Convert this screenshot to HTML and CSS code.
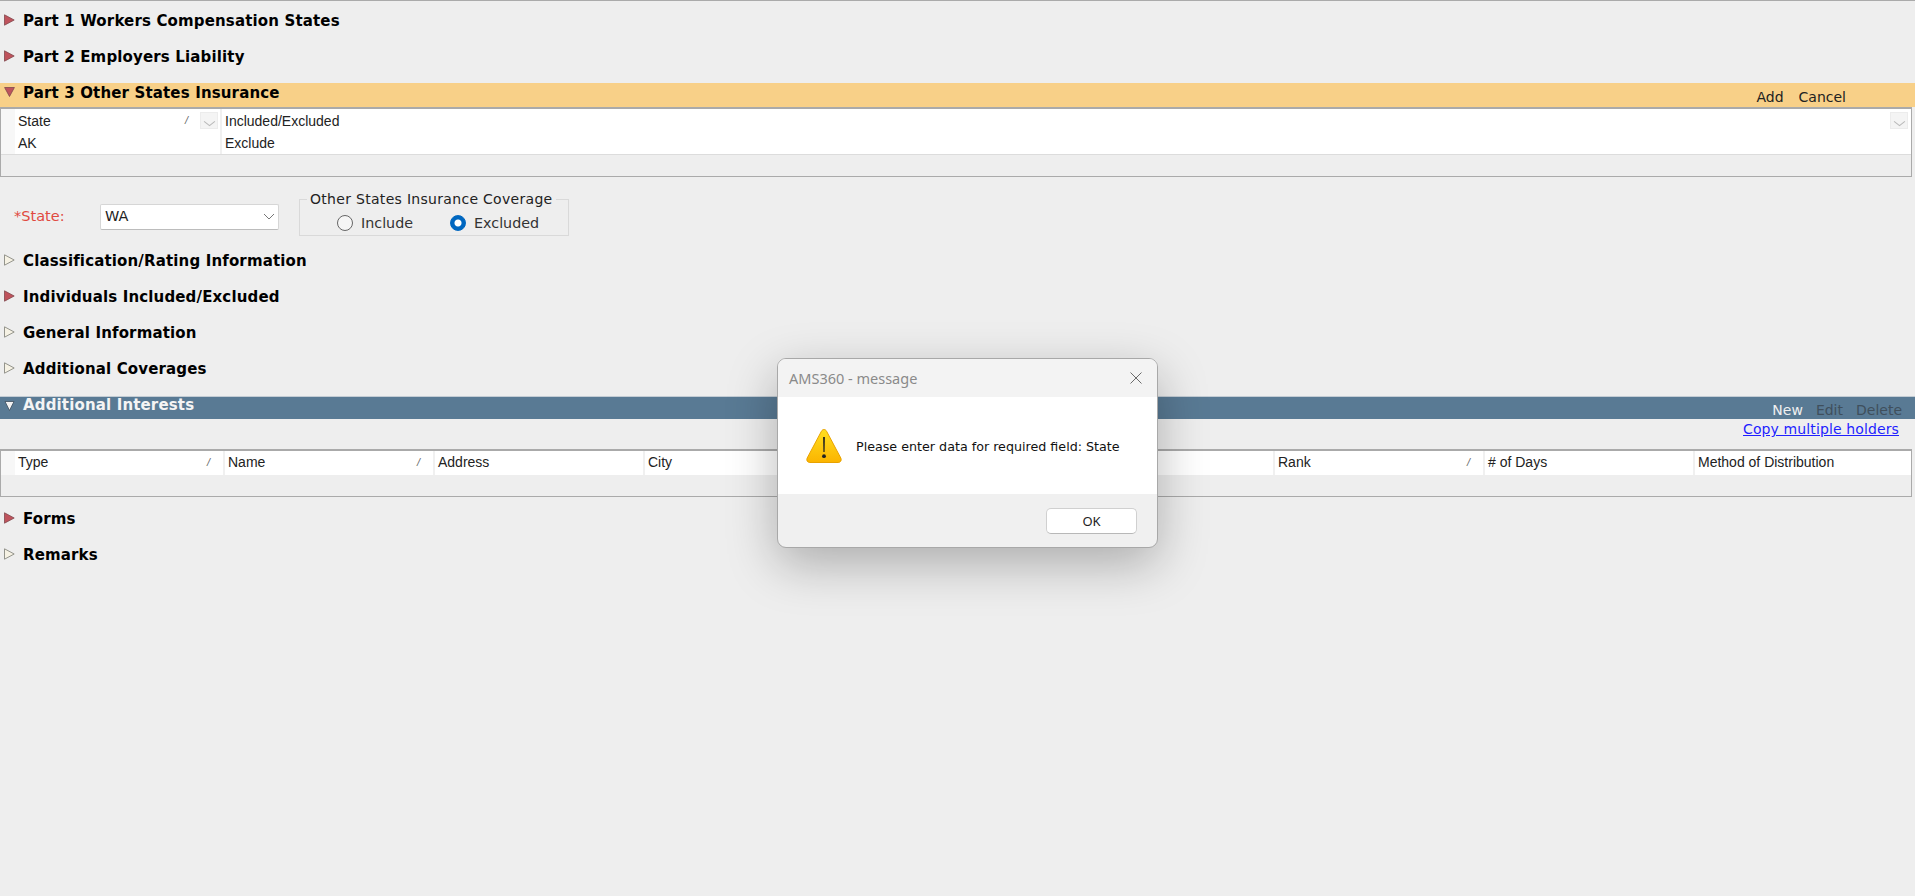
FILE: index.html
```html
<!DOCTYPE html>
<html lang="en">
<head>
  <meta charset="UTF-8">
  <title>AMS360</title>
  <link rel="stylesheet" href="styles.css">
</head>
<body>
  <div class="page">
    <div class="sec">
      <svg class="tri" viewBox="0 0 11 12"><path class="tri-red" d="M.5 .8L10.2 6L.5 11.2Z"/></svg>
      <span class="sec-title">Part 1 Workers Compensation States</span>
    </div>
    <div class="sec">
      <svg class="tri" viewBox="0 0 11 12"><path class="tri-red" d="M.5 .8L10.2 6L.5 11.2Z"/></svg>
      <span class="sec-title">Part 2 Employers Liability</span>
    </div>

    <!-- Part 3 abierto -->
    <div class="bar bar-yellow">
      <svg class="tri-down" viewBox="0 0 11 10"><path class="tri-red" d="M.6 .5H10.4L5.5 9.5Z"/></svg>
      <span class="sec-title">Part 3 Other States Insurance</span>
      <div class="bar-actions">
        <span>Add</span>
        <span>Cancel</span>
      </div>
    </div>
    <div class="panel panel-states">
      <div class="grid-rows">
        <div class="row row-head cols-states">
          <div class="cell">State<i class="sort">/</i><span class="drop"><svg viewBox="0 0 12 8"><path d="M1 2L6 6L11 2" fill="none" stroke="#b9b9b9"/></svg></span></div>
          <div class="cell">Included/Excluded<span class="drop drop-end"><svg viewBox="0 0 12 8"><path d="M1 2L6 6L11 2" fill="none" stroke="#b9b9b9"/></svg></span></div>
        </div>
        <div class="row cols-states">
          <div class="cell">AK</div>
          <div class="cell">Exclude</div>
        </div>
      </div>
    </div>

    <div class="state-form">
      <label class="state-label" for="state">*State:</label>
      <div class="select-wrap">
        <select id="state" class="state-select">
          <option>WA</option>
        </select>
        <svg class="chevron" viewBox="0 0 12 8"><path d="M1 1L6 6L11 1" fill="none" stroke="#777" stroke-width="1"/></svg>
      </div>
      <fieldset class="coverage">
        <legend>Other States Insurance Coverage</legend>
        <label class="radio radio-include"><input type="radio" name="cov"> Include</label>
        <label class="radio"><input type="radio" name="cov" checked> Excluded</label>
      </fieldset>
    </div>

    <div class="sec">
      <svg class="tri" viewBox="0 0 11 12"><path class="tri-empty" d="M.5 .8L10.2 6L.5 11.2Z"/></svg>
      <span class="sec-title">Classification/Rating Information</span>
    </div>
    <div class="sec">
      <svg class="tri" viewBox="0 0 11 12"><path class="tri-red" d="M.5 .8L10.2 6L.5 11.2Z"/></svg>
      <span class="sec-title">Individuals Included/Excluded</span>
    </div>
    <div class="sec">
      <svg class="tri" viewBox="0 0 11 12"><path class="tri-empty" d="M.5 .8L10.2 6L.5 11.2Z"/></svg>
      <span class="sec-title">General Information</span>
    </div>
    <div class="sec">
      <svg class="tri" viewBox="0 0 11 12"><path class="tri-empty" d="M.5 .8L10.2 6L.5 11.2Z"/></svg>
      <span class="sec-title">Additional Coverages</span>
    </div>

    <!-- Additional Interests abierto -->
    <div class="bar bar-blue">
      <svg class="tri-down" viewBox="0 0 11 10"><path class="tri-white" d="M1 .5H10L5.5 9.5Z"/></svg>
      <span class="sec-title">Additional Interests</span>
      <div class="bar-actions">
        <span class="act-on">New</span>
        <span class="act-off">Edit</span>
        <span class="act-off">Delete</span>
      </div>
    </div>
    <div class="link-row"><a href="#" class="copy-link">Copy multiple holders</a></div>
    <div class="panel panel-interests">
      <div class="grid-rows">
        <div class="row row-head cols-interests">
          <div class="cell">Type<i class="sort sort-end">/</i></div>
          <div class="cell">Name<i class="sort sort-end">/</i></div>
          <div class="cell">Address</div>
          <div class="cell">City</div>
          <div class="cell"></div>
          <div class="cell"></div>
          <div class="cell">Rank<i class="sort sort-end">/</i></div>
          <div class="cell"># of Days</div>
          <div class="cell">Method of Distribution</div>
        </div>
      </div>
    </div>

    <div class="sec sec-forms">
      <svg class="tri" viewBox="0 0 11 12"><path class="tri-red" d="M.5 .8L10.2 6L.5 11.2Z"/></svg>
      <span class="sec-title">Forms</span>
    </div>
    <div class="sec">
      <svg class="tri" viewBox="0 0 11 12"><path class="tri-empty" d="M.5 .8L10.2 6L.5 11.2Z"/></svg>
      <span class="sec-title">Remarks</span>
    </div>
  </div>

  <!-- Mensaje -->
  <div class="dialog">
    <div class="dialog-title">
      <span>AMS360 - message</span>
      <svg class="dialog-close" viewBox="0 0 12 12"><path d="M.5 .5L11.5 11.5M11.5 .5L.5 11.5" stroke="#6a6a6a" fill="none"/></svg>
    </div>
    <div class="dialog-body">
      <svg class="warn" viewBox="0 0 36 36">
        <defs>
          <linearGradient id="warnFill" x1="0" y1="0" x2="0" y2="1">
            <stop offset="0" stop-color="#ffdf20"/>
            <stop offset="1" stop-color="#fbb400"/>
          </linearGradient>
        </defs>
        <path d="M18 1.5C16.8 1.5 16 2.2 15.4 3.3L1.2 30C.1 32.2 1.4 34.5 3.8 34.5H32.2C34.6 34.5 35.9 32.2 34.8 30L20.6 3.3C20 2.2 19.2 1.5 18 1.5Z" fill="url(#warnFill)" stroke="#e8a200"/>
        <path d="M17.1 9H18.9L18.6 24H17.4Z" fill="#222"/>
        <circle cx="18" cy="28.2" r="1.9" fill="#222"/>
      </svg>
      <span class="dialog-msg">Please enter data for required field: State</span>
    </div>
    <div class="dialog-foot">
      <button class="dialog-ok">OK</button>
    </div>
  </div>
</body>
</html>
```

FILE: styles.css
```css
body {
  margin: 0;
  background-color: #eeeeee;
  font-family: "DejaVu Sans", sans-serif;
  color: #000;
  overflow: hidden;
}

.page {
  border-top: 1px solid #aaa;
  padding-top: 1px;
  height: 894px;
}

/* Encabezados de seccion */
.sec {
  display: flex;
  align-items: center;
  height: 36px;
}

.sec-forms {
  margin-top: 3px;
}

.tri {
  width: 11px;
  height: 12px;
  margin-left: 4px;
  flex: none;
}

.tri-red {
  fill: #bf535c;
  stroke: #80484d;
  stroke-width: 0.8;
}

.tri-empty {
  fill: #f6f2e4;
  stroke: #94948c;
  stroke-width: 1;
}

.tri-white {
  fill: #f2f2f2;
  stroke: #3d4f5e;
  stroke-width: 0.8;
}

.sec-title {
  margin-left: 8px;
  font-size: 15px;
  font-weight: bold;
  line-height: 18px;
  letter-spacing: 0.15px;
  color: #000;
}

.sec .sec-title {
  padding-top: 2px;
}

.bar {
  display: flex;
  position: relative;
  align-items: flex-start;
}

.bar .sec-title {
  margin-left: 8px;
}

.tri-down {
  width: 11px;
  height: 10px;
  margin: 4px 0 0 4px;
  flex: none;
}

.bar-yellow {
  margin-top: 9px;
  height: 24px;
  background-color: #f8d088;
  padding-top: 0;
}

.bar-yellow .sec-title {
  padding-top: 1px;
}

.bar-blue {
  margin-top: 10px;
  height: 23px;
  background-color: #597a94;
  border-top: 1px solid #c3ccd4;
  box-sizing: border-box;
}

.bar-blue .sec-title {
  color: #f4f4f4;
  line-height: 16px;
}

.bar-blue .tri-down {
  margin-top: 4px;
}

.bar-actions {
  margin-left: auto;
  display: flex;
  font-size: 14px;
  line-height: 16px;
  margin-top: 5px;
}

.bar-yellow .bar-actions {
  gap: 15px;
  margin-right: 69px;
  margin-top: 6px;
  color: #222;
}

.bar-blue .bar-actions {
  gap: 13px;
  margin-right: 13px;
  margin-top: 5px;
}

.act-on {
  color: #f0f0f0;
}

.act-off {
  color: #3f4f5c;
}

/* Grillas */
.panel {
  width: 1912px;
  box-sizing: border-box;
  border: 1px solid #aaa;
  border-top-width: 2px;
  border-left-width: 1px;
}

.panel-states {
  height: 70px;
}

.panel-interests {
  height: 48px;
}

.grid-rows {
  font-family: "Liberation Sans", Arial, sans-serif;
  font-size: 14px;
  color: #222;
  background-color: #fff;
  background-image: linear-gradient(#f7f7f7, #f7f7f7);
  background-size: 14px 100%;
  background-repeat: no-repeat;
}

.panel-states .grid-rows {
  border-bottom: 1px solid #dcdcdc;
  padding-left: 14px;
}

.panel-states .row-head .cell {
  padding-top: 4px;
}

.panel-interests .grid-rows {
  padding-left: 14px;
}

.row {
  display: grid;
  height: 22px;
}

.row-head {
  height: 23px;
}

.panel-interests .row-head {
  height: 24px;
}

.cols-states {
  grid-template-columns: 207px 1fr;
}

.cols-interests {
  grid-template-columns: repeat(8, 210px) 1fr;
}

.cell {
  position: relative;
  padding: 3px 0 0 3px;
  line-height: 17px;
  border-right: 2px solid #f0f0f0;
  white-space: nowrap;
}

.cell:last-child {
  border-right: none;
}

.sort {
  position: absolute;
  right: 32px;
  top: 3px;
  font-size: 11px;
  color: #666;
}

.sort-end {
  right: 13px;
}

.drop {
  position: absolute;
  right: 2px;
  top: 3px;
  width: 18px;
  height: 17px;
  box-sizing: border-box;
  background-color: #f4f4f4;
  border: 1px solid #ececec;
}

.drop svg {
  display: block;
  width: 13px;
  height: 9px;
  margin: 6px 0 0 2px;
}

.drop-end {
  right: 3px;
}

/* Formulario de estado */
.state-form {
  display: flex;
  align-items: flex-start;
  margin: 22px 0 6px;
  height: 37px;
}

.state-label {
  margin: 8px 0 0 14px;
  width: 86px;
  font-size: 14.5px;
  line-height: 18px;
  color: #e0493f;
}

.select-wrap {
  position: relative;
  margin-top: 5px;
}

.state-select {
  display: block;
  appearance: none;
  width: 179px;
  height: 26px;
  padding: 0 0 2px 4px;
  border: 1px solid #d6d6d6;
  border-bottom-color: #bcbcbc;
  border-radius: 2px;
  background-color: #fff;
  font-family: "DejaVu Sans", sans-serif;
  font-size: 14.5px;
  color: #222;
}

.chevron {
  position: absolute;
  right: 4px;
  top: 9px;
  width: 12px;
  height: 8px;
}

.coverage {
  display: flex;
  margin: -7px 0 0 20px;
  padding: 0;
  width: 270px;
  height: 44px;
  box-sizing: border-box;
  border: 1px solid #d9d9d9;
  font-size: 14.3px;
  color: #333;
}

.coverage legend {
  margin-left: 7px;
  padding: 0 3px;
  font-size: 14px;
  line-height: 15px;
  letter-spacing: 0.3px;
  white-space: nowrap;
  color: #222;
}

.radio {
  display: flex;
  align-items: center;
  gap: 8px;
  height: 20px;
  margin-top: 6px;
}

.radio-include {
  margin: 6px 37px 0 37px;
}

.radio input {
  appearance: none;
  margin: 0;
  width: 16px;
  height: 16px;
  border: 1px solid #666;
  border-radius: 50%;
  background-color: #f6f6f6;
}

.radio input:checked {
  border-color: #0067c0;
  background: radial-gradient(circle, #fff 0, #fff 3px, #0067c0 4px);
}

.link-row {
  display: flex;
  justify-content: flex-end;
  height: 30px;
  padding-right: 16px;
}

.copy-link {
  font-size: 14px;
  line-height: 20px;
  letter-spacing: 0.12px;
  color: #1f1fff;
}

/* Dialogo */
.dialog {
  position: absolute;
  left: 777px;
  top: 358px;
  width: 381px;
  height: 190px;
  box-sizing: border-box;
  display: flex;
  flex-direction: column;
  border: 1px solid #a8a8a8;
  border-radius: 9px;
  background-color: #f0f0f0;
  box-shadow: 0 16px 50px rgba(0, 0, 0, 0.28);
  overflow: hidden;
}

.dialog-title {
  display: flex;
  align-items: center;
  justify-content: space-between;
  height: 38px;
  padding: 0 15px 0 11px;
  background-color: #f3f3f3;
  font-family: "Noto Sans", sans-serif;
  font-size: 14.5px;
  color: #8a8a8a;
}

.dialog-close {
  width: 12px;
  height: 12px;
}

.dialog-body {
  display: flex;
  align-items: center;
  height: 97px;
  padding-left: 28px;
  background-color: #fff;
}

.warn {
  width: 36px;
  height: 36px;
}

.dialog-msg {
  margin: 2px 0 0 14px;
  font-size: 12.7px;
  color: #111;
}

.dialog-foot {
  display: flex;
  justify-content: flex-end;
  padding: 14px 20px 0 0;
}

.dialog-ok {
  width: 91px;
  height: 26px;
  border: 1px solid #d0d0d0;
  border-bottom-color: #b8b8b8;
  border-radius: 5px;
  background-color: #fff;
  font-family: "Noto Sans", sans-serif;
  font-size: 13px;
  color: #222;
  padding: 0;
}
```
